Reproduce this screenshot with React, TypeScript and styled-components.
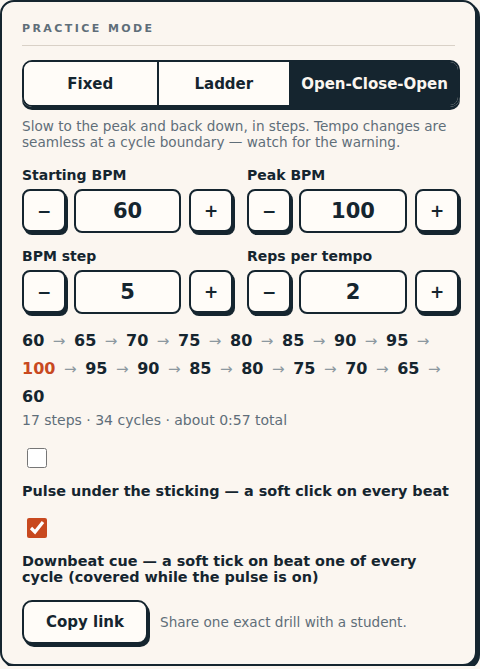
import React from "react";
import styled, { createGlobalStyle } from "styled-components";

const ink = "#15252f";
const muted = "#5f6e79";
const accent = "#c8491f";

const Global = createGlobalStyle`
  html, body { margin: 0; padding: 0; background: #fbf6f0; }
  body { font-family: "DejaVu Sans", "Noto Sans", sans-serif; color: ${ink}; }
  * { box-sizing: border-box; }
`;

const Panel = styled.section`
  width: 477px;
  min-height: 666px;
  background: #fbf6f0;
  border: 2px solid ${ink};
  border-radius: 14px;
  box-shadow: 3px 3px 0 ${ink};
  padding: 20px 20px 16px 20px;
  display: flex;
  flex-direction: column;
`;

const Eyebrow = styled.h2`
  margin: 0;
  font-size: 11px;
  font-weight: 700;
  letter-spacing: 0.22em;
  color: ${muted};
  padding-bottom: 10px;
  border-bottom: 1px solid #d9d1c7;
`;

const Segmented = styled.div`
  margin-top: 14px;
  display: flex;
  border: 2px solid ${ink};
  border-radius: 10px;
  box-shadow: 0 3px 0 ${ink};
  overflow: hidden;
  width: 438px;
`;

const Segment = styled.button<{ $active?: boolean; $grow: number }>`
  flex: ${(p) => p.$grow} 1 0;
  height: 43px;
  border: none;
  border-left: 2px solid ${ink};
  &:first-child { border-left: none; }
  background: ${(p) => (p.$active ? ink : "#fffcf8")};
  color: ${(p) => (p.$active ? "#fbf6f0" : ink)};
  font-family: inherit;
  font-size: 15px;
  font-weight: 700;
  padding: 0;
`;

const Desc = styled.p`
  margin: 11px 0 0 0;
  font-size: 13.6px;
  line-height: 16px;
  color: ${muted};
`;

const Grid = styled.div`
  margin-top: 16px;
  display: grid;
  grid-template-columns: 211px 212px;
  column-gap: 14px;
  row-gap: 12px;
`;

const Field = styled.div`
  display: flex;
  flex-direction: column;
  gap: 5px;
`;

const Label = styled.label`
  font-size: 14px;
  font-weight: 700;
  line-height: 18px;
`;

const Stepper = styled.div`
  display: flex;
  gap: 8px;
  height: 46px;
`;

const StepBtn = styled.button`
  width: 44px;
  height: 43px;
  border: 2px solid ${ink};
  border-radius: 8px;
  box-shadow: 2px 3px 0 ${ink};
  background: #fffcf8;
  color: ${ink};
  font-family: inherit;
  font-size: 17px;
  font-weight: 700;
  padding: 0;
`;

const Value = styled.div`
  flex: 1;
  height: 44px;
  border: 2px solid ${ink};
  border-radius: 8px;
  background: #fffcf8;
  display: flex;
  align-items: center;
  justify-content: center;
  font-size: 21px;
  font-weight: 700;
`;

const Sequence = styled.div`
  margin-top: 11px;
  font-size: 16px;
  font-weight: 700;
  line-height: 27px;
`;

const Num = styled.span<{ $peak?: boolean }>`
  color: ${(p) => (p.$peak ? accent : ink)};
`;

const Arrow = styled.span`
  color: #8c989f;
  font-weight: 400;
  font-size: 15px;
  margin: 0 3px;
`;

const Summary = styled.div`
  margin-top: 1px;
  font-size: 14px;
  line-height: 18px;
  color: ${muted};
`;

const Option = styled.label`
  display: flex;
  flex-direction: column;
  align-items: flex-start;
  gap: 12px;
  margin-top: 16px;
  font-size: 14.4px;
  font-weight: 700;
  line-height: 16px;
`;

const Check = styled.input`
  width: 20px;
  height: 20px;
  margin: 3px 3px 3px 5px;
  accent-color: ${accent};
`;

const Footer = styled.div`
  margin-top: 15px;
  display: flex;
  align-items: center;
  gap: 12px;
`;

const CopyBtn = styled.button`
  width: 126px;
  height: 44px;
  border: 2px solid ${ink};
  border-radius: 10px;
  box-shadow: 2px 3px 0 ${ink};
  background: #fffcf8;
  color: ${ink};
  font-family: inherit;
  font-size: 15px;
  font-weight: 700;
`;

const Hint = styled.span`
  font-size: 13.6px;
  color: ${muted};
`;

const fields = [
  { label: "Starting BPM", value: 60 },
  { label: "Peak BPM", value: 100 },
  { label: "BPM step", value: 5 },
  { label: "Reps per tempo", value: 2 },
];

const seq = [60, 65, 70, 75, 80, 85, 90, 95, 100, 95, 90, 85, 80, 75, 70, 65, 60];

export default function App() {
  return (
    <>
      <Global />
      <Panel>
        <Eyebrow>PRACTICE MODE</Eyebrow>
        <Segmented>
          <Segment $grow={135}>Fixed</Segment>
          <Segment $grow={133}>Ladder</Segment>
          <Segment $grow={170} $active>Open-Close-Open</Segment>
        </Segmented>
        <Desc>
          Slow to the peak and back down, in steps. Tempo changes are seamless at a cycle boundary — watch for the warning.
        </Desc>
        <Grid>
          {fields.map((f) => (
            <Field key={f.label}>
              <Label>{f.label}</Label>
              <Stepper>
                <StepBtn>−</StepBtn>
                <Value>{f.value}</Value>
                <StepBtn>+</StepBtn>
              </Stepper>
            </Field>
          ))}
        </Grid>
        <Sequence>
          {seq.map((n, i) => (
            <React.Fragment key={i}>
              <Num $peak={i === 8}>{n}</Num>
              {i < seq.length - 1 && (
                <>
                  {"\u00a0"}
                  <Arrow>→</Arrow>{" "}
                </>
              )}
            </React.Fragment>
          ))}
        </Sequence>
        <Summary>17 steps · 34 cycles · about 0:57 total</Summary>
        <Option>
          <Check type="checkbox" />
          <span>Pulse under the sticking — a soft click on every beat</span>
        </Option>
        <Option>
          <Check type="checkbox" defaultChecked />
          <span>Downbeat cue — a soft tick on beat one of every cycle (covered while the pulse is on)</span>
        </Option>
        <Footer>
          <CopyBtn>Copy link</CopyBtn>
          <Hint>Share one exact drill with a student.</Hint>
        </Footer>
      </Panel>
    </>
  );
}
